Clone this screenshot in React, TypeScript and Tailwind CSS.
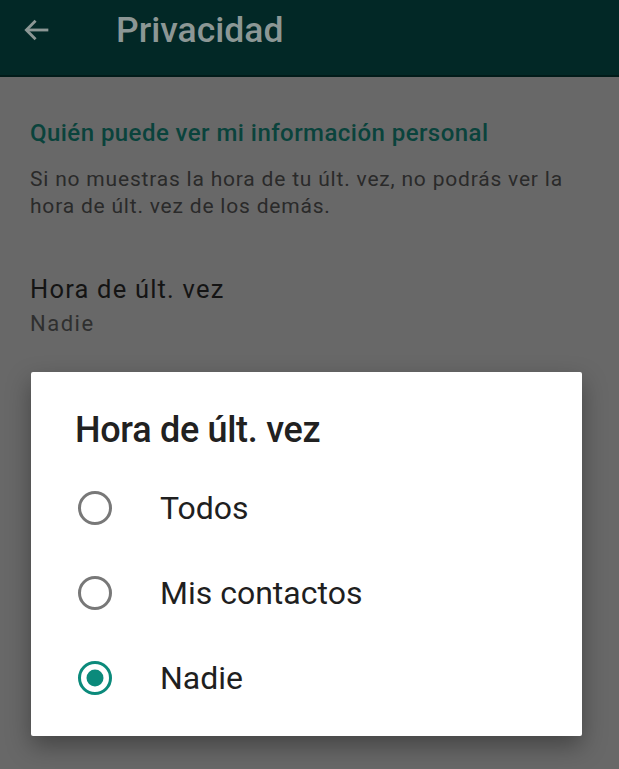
import React from "react";

const font = { fontFamily: "Roboto, 'Noto Sans', sans-serif" };

function Radio({ checked }: { checked?: boolean }) {
  return (
    <svg width="36" height="36" viewBox="0 0 36 36" className="shrink-0">
      {checked ? (
        <>
          <circle cx="18" cy="18" r="15.5" fill="none" stroke="#0b8a7b" strokeWidth="3" />
          <circle cx="18" cy="18" r="8.5" fill="#0b8a7b" />
        </>
      ) : (
        <circle cx="18" cy="18" r="15.5" fill="none" stroke="#787878" strokeWidth="3" />
      )}
    </svg>
  );
}

export default function App() {
  const options = [
    { label: "Todos", checked: false },
    { label: "Mis contactos", checked: false },
    { label: "Nadie", checked: true },
  ];
  return (
    <div className="relative w-[619px] h-[769px] overflow-hidden bg-[#686868]" style={font}>
      {/* header */}
      <div className="h-[77px] bg-[#022826] border-b-[2px] border-[#011b19] flex items-start pt-[10px]">
        <div className="w-[116px] flex pl-[20px] pt-[3px]">
          <svg width="34" height="34" viewBox="0 0 24 24" fill="none" stroke="#8c9795" strokeWidth="2">
            <path d="M20 12H4.5" />
            <path d="M11 5.5L4.5 12L11 18.5" />
          </svg>
        </div>
        <div className="text-[35.5px] leading-[40px] font-medium text-[#8c9795]">Privacidad</div>
      </div>

      {/* page content */}
      <div className="px-[30px] pt-[41px]">
        <div className="text-[24px] leading-[30px] font-medium tracking-[0.45px] text-[#0a433c] whitespace-nowrap">
          Quién puede ver mi información personal
        </div>
        <div className="mt-[18px] text-[21px] leading-[27px] tracking-[0.8px] text-[#2a2a2a]">
          Si no muestras la hora de tu últ. vez, no podrás ver la
          <br />
          hora de últ. vez de los demás.
        </div>
        <div className="mt-[53px] text-[25.5px] leading-[32px] tracking-[1.2px] text-[#141414]">Hora de últ. vez</div>
        <div className="mt-[5px] text-[22px] leading-[28px] tracking-[1.5px] text-[#2f2f2f]">Nadie</div>
      </div>

      {/* dialog */}
      <div className="absolute left-[31px] top-[372px] w-[551px] h-[364px] bg-white rounded-[2px] shadow-[0_10px_24px_rgba(0,0,0,0.35)]">
        <div className="pl-[44px] pt-[40px] text-[36px] leading-[36px] font-medium tracking-[-0.3px] text-[#212121]">
          Hora de últ. vez
        </div>
        <div className="mt-[17px] flex flex-col">
          {options.map((o) => (
            <div key={o.label} className="h-[85px] flex items-center pl-[46px]">
              <Radio checked={o.checked} />
              <div className="ml-[47px] text-[32px] leading-[36px] text-[#1f1f1f]">{o.label}</div>
            </div>
          ))}
        </div>
      </div>
    </div>
  );
}
